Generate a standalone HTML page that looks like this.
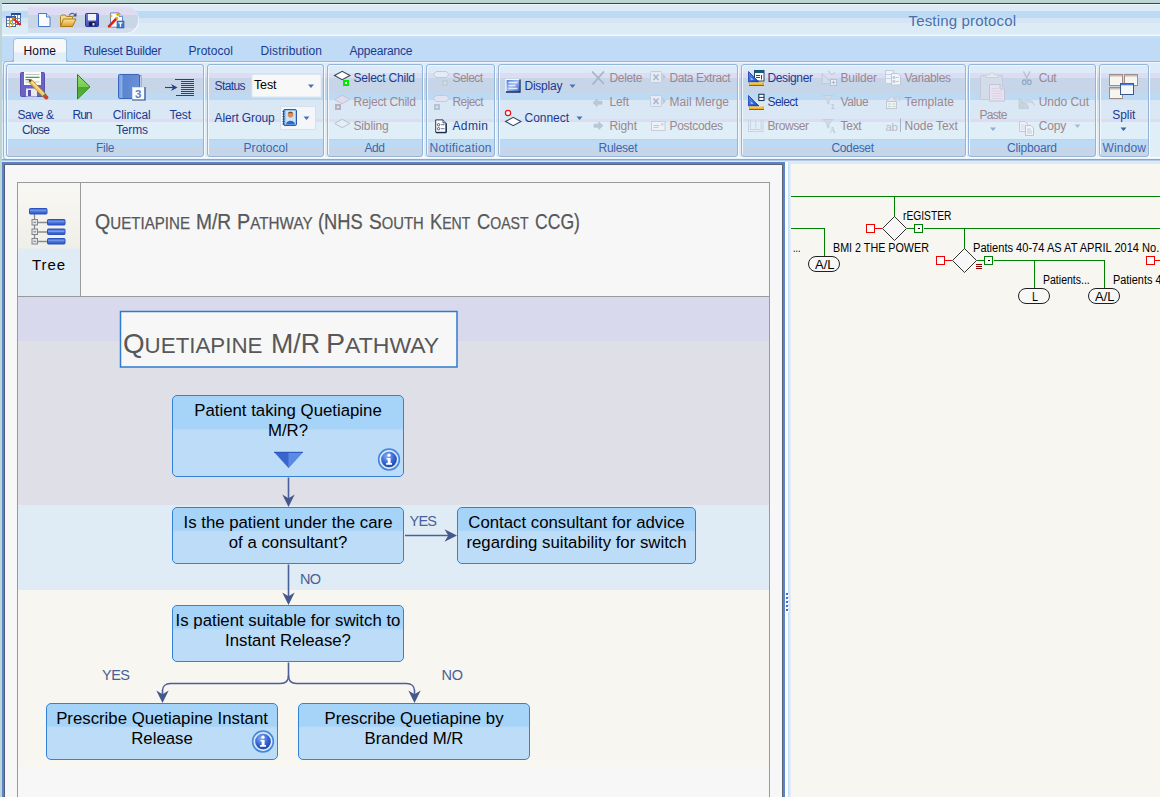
<!DOCTYPE html>
<html>
<head>
<meta charset="utf-8">
<title>Testing protocol</title>
<style>
html,body{margin:0;padding:0;}
body{width:1160px;height:797px;overflow:hidden;position:relative;background:#bdd5d5;font-family:"Liberation Sans",sans-serif;font-size:12px;line-height:14px;color:#1a3a92;}
div,span{box-sizing:border-box;}
svg{position:absolute;left:0;top:0;overflow:visible;}
#titlebar{position:absolute;left:2px;top:3px;width:1158px;height:34px;background:linear-gradient(#1f4587 0,#1f4587 1px,#eef5fb 1px,#eef5fb 2px,#dcebf5 2px,#dcebf5 8px,#bddaf4 8px,#bddaf4 15px,#d6e5f3 15px,#d6e5f3 20px,#dcecf6 20px,#dcecf6 31px,#f2f8fc 32px,#f2f8fc 33px,#c6def5 33px,#c6def5 34px);}
#qat{position:absolute;left:26px;top:3px;width:110px;height:27px;border-radius:0 13px 13px 0;background:linear-gradient(#e6e8f6 0,#dedcf2 2px,#dedcf2 9px,#c8d6e6 9px,#c8d6e6 22px,#d2deee 22px,#d2deee 26px);box-shadow:1px 1px 0 #eef4fb;}
#tabs{position:absolute;left:2px;top:37px;width:1158px;height:26px;background:linear-gradient(#c6def5 0,#bfdbf5 3px,#bfdbf5 100%);}
#tabs2{position:absolute;left:2px;top:37px;width:200px;height:26px;}
#hometab{position:absolute;left:11px;top:1px;width:54px;height:24px;border:1px solid #9dbfe2;border-bottom:none;border-radius:4px 4px 0 0;background:linear-gradient(#f9f9f9 0,#f6f7f8 13px,#e1edf7 14px,#e1edf7 24px);}
#hometab:before{content:"";position:absolute;left:-4px;bottom:0;width:3px;height:3px;border-right:1px solid #9dbfe2;border-bottom:1px solid #9dbfe2;border-radius:0 0 4px 0;}
#hometab:after{content:"";position:absolute;right:-4px;bottom:0;width:3px;height:3px;border-left:1px solid #9dbfe2;border-bottom:1px solid #9dbfe2;border-radius:0 0 0 4px;}
#ribbon{position:absolute;left:2px;top:62px;width:1158px;height:102px;background:linear-gradient(#e4eff9 0,#dcebf7 2px,#dcebf7 11px,#dcdcf2 11px,#dcdcf2 16px,#c6d6e8 16px,#c6d6e8 31px,#bddaf4 31px,#bddaf4 38px,#dae7f5 38px,#dae7f5 57px,#dcdcf2 57px,#dcdcf2 60px,#dfeef7 60px,#dfeef7 95px,#fbfdfe 95px,#fbfdfe 96px,#dbe7f4 97px,#8aa6c8 97px,#8aa6c8 98px,#b4cae4 98px,#b4cae4 99px,#dceaf6 99px,#dceaf6 102px);}
#ribedge{position:absolute;left:3px;top:61px;width:1170px;height:99px;border:1px solid #8fb8ea;border-radius:4px;border-bottom-color:#8aa6c8;box-shadow:inset 1px 1px 0 #f0f6fb;}
.grp{position:absolute;top:2px;height:93px;border:1px solid #93b4d6;border-radius:3px;box-shadow:1px 1px 0 #f6fafd,inset 1px 1px 0 #f0f6fb;background:linear-gradient(rgba(0,0,0,0) 0,rgba(0,0,0,0) 74px,#b8cce0 74px,#bddaf4 75px,#bddaf4 83px,#c6d6e8 83px,#c6d6e8 90px,#bddaf4 90px,#bddaf4 91px);}
.gl{position:absolute;white-space:nowrap;color:#3e66aa;}
.t{position:absolute;white-space:nowrap;}
.dis{color:#9a8890;}
.blk{color:#000;}
#leftpane{position:absolute;left:2px;top:162px;width:783px;height:640px;border:2px solid #5b84cc;background:#f7f7f7;}
#leftpane:before{content:"";position:absolute;left:0;top:0;right:0;bottom:0;border-left:1px solid #505c78;border-top:1px solid #5c6478;border-right:1px solid #5a6678;}
#inner{position:absolute;left:17px;top:182px;width:753px;height:620px;border:1px solid #9a9a9a;background:#f7f7f7;}
#hdr{position:absolute;left:0;top:0;width:751px;height:114px;border-bottom:1px solid #9a9a9a;background:#f7f7f7;}
#treecell{position:absolute;left:0;top:0;width:63px;height:113px;border-right:1px solid #9a9a9a;background:linear-gradient(#f7f7f7 0,#f7f6f0 14px,#f3f2ec 40px,#efefe9 65px,#dfecf6 66px,#dfecf6 113px);}
#canvas{position:absolute;left:0;top:114px;width:751px;height:510px;background:linear-gradient(#d9d9ee 0,#d9d9ee 44px,#dfdfe8 44px,#dfdfe8 208px,#dfecf6 208px,#dfecf6 293px,#f7f6f0 293px,#f7f6f0 470px,#f7f7f7 470px);}
.fb{position:absolute;border:1px solid #3283d7;border-radius:5px;background:linear-gradient(#a6d3f8 0,#a6d3f8 40%,#bcdcf7 43%,#bcdcf7 100%);color:#000;font-size:16.8px;line-height:20px;text-align:center;white-space:nowrap;}
#split1{position:absolute;left:785px;top:162px;width:3px;height:640px;background:#fdfdfd;}
#split2{position:absolute;left:788px;top:162px;width:3px;height:640px;background:linear-gradient(90deg,#c4dcf4,#d4e6f8 50%,#e8f0f8);}
#rightpane{position:absolute;left:791px;top:164px;width:369px;height:640px;background:#f7f6f0;}
.rt{position:absolute;white-space:nowrap;color:#000;font-size:12px;line-height:14px;}
.lbl{position:absolute;white-space:nowrap;color:#4a5f94;font-size:14.5px;line-height:16px;}
</style>
</head>
<body>
<div id="titlebar"><div id="qat"></div></div>
<div id="tabs"></div>
<div id="ribbon">
<div class="grp" style="left:4px;width:198px;"></div>
<div class="grp" style="left:205px;width:117px;"></div>
<div class="grp" style="left:325px;width:96px;"></div>
<div class="grp" style="left:424px;width:69px;"></div>
<div class="grp" style="left:496px;width:240px;"></div>
<div class="grp" style="left:739px;width:225px;"></div>
<div class="grp" style="left:966px;width:128px;"></div>
<div class="grp" style="left:1097px;width:50px;"></div>
</div>
<div id="ribedge"></div>
<div id="tabs2"><div id="hometab"></div></div>
<div id="leftpane"></div>
<div id="inner"><div id="hdr"><div id="treecell"></div></div><div id="canvas"></div></div>
<div id="split1"></div><div id="split2"></div><div id="rightpane"></div>
<div class="fb" style="left:172px;top:395px;width:232px;height:82px;padding-top:5px;">Patient taking Quetiapine<br>M/R?</div>
<div class="fb" style="left:172px;top:507px;width:232px;height:57px;padding-top:5px;">Is the patient under the care<br>of a consultant?</div>
<div class="fb" style="left:457px;top:507px;width:239px;height:57px;padding-top:5px;">Contact consultant for advice<br>regarding suitability for switch</div>
<div class="fb" style="left:172px;top:605px;width:232px;height:57px;padding-top:5px;">Is patient suitable for switch to<br>Instant Release?</div>
<div class="fb" style="left:46px;top:703px;width:232px;height:57px;padding-top:5px;">Prescribe Quetiapine Instant<br>Release</div>
<div class="fb" style="left:298px;top:703px;width:232px;height:57px;padding-top:5px;">Prescribe Quetiapine by<br>Branded M/R</div>
<svg width="1160" height="797" viewBox="0 0 1160 797">
<defs>
<linearGradient id="gBar" x1="0" y1="0" x2="0" y2="1"><stop offset="0" stop-color="#3a62cc"/><stop offset=".45" stop-color="#7aa0ec"/><stop offset=".55" stop-color="#4a76dc"/><stop offset="1" stop-color="#2a50c0"/></linearGradient>
<radialGradient id="gInfo" cx=".4" cy=".3" r=".8"><stop offset="0" stop-color="#8ab4f0"/><stop offset=".5" stop-color="#3a6ad8"/><stop offset="1" stop-color="#1a3a9a"/></radialGradient>
<g id="info"><circle r="10.400" fill="#b4cef0" stroke="#4088e0" stroke-width="1.500"/><circle r="8.600" fill="none" stroke="#e4eefa" stroke-width="1.100"/><circle r="7.800" fill="url(#gInfo)"/><circle cx="0" cy="-4.300" r="1.600" fill="#fff"/><path d="M-2.400 -1.600h4v5.200h1.400v1.700h-5.900v-1.700h1.600v-3.500h-1.100z" fill="#fff"/></g>
<path id="ahd" d="M0 0l-6.200-12.500l6.200 3.800l6.200-3.800z" fill="#44588e"/>
</defs>
<!-- tree icon -->
<g>
<path d="M34.500 214v26.500M35 222.500h13M35 232h13M35 241.500h13" stroke="#8a8a92" stroke-width="1.300" fill="none"/>
<rect x="29.500" y="208.500" width="17.500" height="5.500" rx=".8" fill="url(#gBar)" stroke="#2a52c0"/>
<rect x="47.500" y="219.500" width="17.500" height="5.500" rx=".8" fill="url(#gBar)" stroke="#2a52c0"/>
<rect x="47.500" y="229" width="17.500" height="5.500" rx=".8" fill="url(#gBar)" stroke="#2a52c0"/>
<rect x="47.500" y="238.500" width="17.500" height="5.500" rx=".8" fill="url(#gBar)" stroke="#2a52c0"/>
<rect x="32" y="219.500" width="5.500" height="5.500" fill="#e4e6ea" stroke="#80848c"/><rect x="32" y="229" width="5.500" height="5.500" fill="#e4e6ea" stroke="#80848c"/><rect x="32" y="238.500" width="5.500" height="5.500" fill="#e4e6ea" stroke="#80848c"/>
<path d="M33.500 222.300h2.500M33.500 231.800h2.500M33.500 241.300h2.500" stroke="#6a6e78" stroke-width=".9"/>
</g>
<!-- title box -->
<rect x="120.500" y="311.500" width="336.500" height="55.500" fill="#f7f7f7" stroke="#2f7bd2" stroke-width="1.500"/>
<!-- funnel in box1 -->
<path d="M274 452h29l-14.500 16z" fill="#3a66cc"/><path d="M288.500 452h14.500l-14.500 16z" fill="#5a8ae4"/><path d="M274 452.300h29" stroke="#2a52b8" stroke-width="1"/>
<use href="#info" x="389" y="459.500"/>
<use href="#info" x="263" y="741.500"/>
<!-- connectors -->
<g stroke="#4a5f98" stroke-width="1.600" fill="none">
<path d="M288.500 477.500v22"/>
<path d="M288.500 564.500v33"/>
<path d="M405 535.500h44"/>
<path d="M288.500 662.500v13c0 5 3 8 8 8h110c5 0 8 3 8 7v5"/>
<path d="M288.500 675.500c0 5-3 8-8 8h-110c-5 0-8 3-8 7v5"/>
</g>
<use href="#ahd" x="288.500" y="507"/>
<use href="#ahd" x="288.500" y="605"/>
<use href="#ahd" x="162.500" y="703"/>
<use href="#ahd" x="414.500" y="703"/>
<use href="#ahd" transform="translate(457 535.500) rotate(-90)"/>
<!-- splitter grip -->
<g><rect x="787" y="594" width="2" height="2" fill="#fff"/><rect x="786" y="593" width="2" height="2" fill="#3f6ccc"/><rect x="787" y="598" width="2" height="2" fill="#fff"/><rect x="786" y="597" width="2" height="2" fill="#3f6ccc"/><rect x="787" y="602" width="2" height="2" fill="#fff"/><rect x="786" y="601" width="2" height="2" fill="#3f6ccc"/><rect x="787" y="606" width="2" height="2" fill="#fff"/><rect x="786" y="605" width="2" height="2" fill="#3f6ccc"/><rect x="787" y="610" width="2" height="2" fill="#fff"/><rect x="786" y="609" width="2" height="2" fill="#3f6ccc"/></g>
<!-- right pane tree -->
<g shape-rendering="crispEdges" fill="none">
<path d="M791 196.500h369M894.500 196.500v20M791 228.500h33.500v28M907 228.500h7M924 228.500h236M964.500 228.500v20M977 260.500h7M994 260.500h110.500v28M1034.500 260.500v28" stroke="#008000" stroke-width="1"/>
<path d="M875 228.500h7M945 260.500h7M1155 260.500h5" stroke="#f00000" stroke-width="1"/>
<rect x="866.500" y="224.500" width="8" height="8" fill="#fdfdfd" stroke="#f00000"/>
<rect x="936.500" y="256.500" width="8" height="8" fill="#fdfdfd" stroke="#f00000"/>
<rect x="1146.500" y="256.500" width="8" height="8" fill="#fdfdfd" stroke="#f00000"/>
<rect x="914.500" y="224.500" width="8" height="8" fill="#fdfdfd" stroke="#008000"/><rect x="918" y="228" width="2" height="1" fill="#000"/>
<rect x="984.500" y="256.500" width="8" height="8" fill="#fdfdfd" stroke="#008000"/><rect x="988" y="260" width="2" height="1" fill="#000"/>
<path d="M976 264.500h6M976 266.500h6M976 268.500h6" stroke="#900000" stroke-width="1"/>
</g>
<path d="M882.500 228.500l12-12l12 12l-12 12z" fill="#f7f7f7" stroke="#303030" stroke-width="1"/>
<path d="M952.500 260.500l12-12l12 12l-12 12z" fill="#f7f7f7" stroke="#303030" stroke-width="1"/>
<rect x="808.500" y="256.500" width="31" height="15" rx="7.500" fill="#f7f7f7" stroke="#202020"/>
<rect x="1018.500" y="288.500" width="31" height="15" rx="7.500" fill="#f7f7f7" stroke="#202020"/>
<rect x="1088.500" y="288.500" width="31" height="15" rx="7.500" fill="#f7f7f7" stroke="#202020"/>
</svg>

<svg width="1160" height="165" viewBox="0 0 1160 165">
<defs>
<linearGradient id="gFold" x1="0" y1="0" x2="0" y2="1"><stop offset="0" stop-color="#fbe7a0"/><stop offset="1" stop-color="#e49a20"/></linearGradient>
<linearGradient id="gFlop" x1="0" y1="0" x2="1" y2="1"><stop offset="0" stop-color="#6f86e0"/><stop offset="1" stop-color="#26309a"/></linearGradient>
<linearGradient id="gRun" x1="0" y1="0" x2="0" y2="1"><stop offset="0" stop-color="#8fdc68"/><stop offset=".5" stop-color="#7acc55"/><stop offset=".5" stop-color="#4aa62a"/><stop offset="1" stop-color="#5ab83a"/></linearGradient>
<linearGradient id="gBook" x1="0" y1="0" x2="1" y2="0"><stop offset="0" stop-color="#6f98dc"/><stop offset=".15" stop-color="#8db0e8"/><stop offset=".22" stop-color="#5b85d0"/><stop offset="1" stop-color="#6a90d6"/></linearGradient>
<linearGradient id="gDisp" x1="0" y1="0" x2="1" y2="1"><stop offset="0" stop-color="#4a78dc"/><stop offset=".5" stop-color="#9ab8f0"/><stop offset="1" stop-color="#3a62c8"/></linearGradient>
<linearGradient id="gTri" x1="0" y1="0" x2="1" y2="1"><stop offset="0" stop-color="#5a8ae8"/><stop offset="1" stop-color="#1a46c0"/></linearGradient>
</defs>
<!-- app icon -->
<g>
<rect x="11.5" y="13.5" width="9" height="11" fill="#fff" stroke="#4a6a9a"/>
<rect x="11" y="13" width="10" height="2" fill="#2a4a9a"/>
<path d="M14.5 15v9M17.5 15v9M12 18.5h9M12 21.5h9" stroke="#6a8ab8" fill="none"/>
<rect x="6.5" y="16.5" width="9" height="10" fill="#fff" stroke="#4a6a9a"/>
<rect x="6" y="16" width="10" height="2" fill="#3a5aaa"/>
<path d="M9.5 18v8M12.5 18v8M7 20.5h8M7 23.5h8" stroke="#7a9ac8" fill="none"/>
<path d="M13 18.5L20.5 25" stroke="#e82010" stroke-width="2.2"/>
<path d="M12.2 17.6l1.8 1.6" stroke="#c89010" stroke-width="2.4"/>
<path d="M10.5 20v3M9 21.5h3M12.5 23v3M11 24.5h3M9.5 25.5v2.5M8.2 26.8h2.6" stroke="#e8b020" stroke-width="1"/>
</g>
<!-- QAT new -->
<path d="M38.5 13.5h8l3.5 3.5v9.500h-11.5z" fill="#fdfdff" stroke="#4a7acc"/>
<path d="M46.500 13.500v3.500h3.500" fill="#e8eef8" stroke="#4a7acc"/>
<!-- QAT open -->
<path d="M60.500 26v-9.500l1-1.500h4l1 1.500h6v2" fill="#f3d98a" stroke="#a8802a"/>
<path d="M60.500 26.500l3-7.500h12.500l-3.500 7.500z" fill="url(#gFold)" stroke="#a87a18"/>
<path d="M69 15.500c1.500-2.500 4.500-2.800 6-.5" fill="none" stroke="#4a6a9a" stroke-width="1.200"/>
<path d="M76.500 12.500v4h-3.800z" fill="#3a5a8a"/>
<!-- QAT save -->
<rect x="85.500" y="13.500" width="13" height="13" rx="1" fill="url(#gFlop)" stroke="#2a3a9a"/>
<rect x="88" y="14" width="8" height="6.500" fill="#f2f2f8"/>
<rect x="89" y="22" width="6.500" height="4" fill="#1a1a4a"/>
<rect x="92.500" y="23" width="2" height="2.500" fill="#e8e8f0"/>
<!-- QAT wizard -->
<path d="M110.500 12.900h8.500l3.500 3.500v10.800h-12z" fill="#fdfdff" stroke="#6a88b8"/>
<path d="M119 12.900v3.500h3.500" fill="#dfe8f4" stroke="#6a88b8"/>
<path d="M109 26.300L116.500 18.500" stroke="#e02010" stroke-width="2.600" stroke-linecap="round"/>
<path d="M116 19l1.600-1.600" stroke="#e8b020" stroke-width="2.600"/>
<path d="M111 14.500v3M109.500 16h3M117.500 13v3M116 14.500h3" stroke="#e8a818" stroke-width="1"/>
<rect x="117" y="21" width="7" height="7" fill="#3a7ad0" stroke="#2a5aa8" stroke-width=".6"/>
<path d="M118.500 22.800h4M120.500 22.800v4" stroke="#fff" stroke-width="1.300"/>
<!-- Save & Close -->
<g>
<rect x="20.500" y="72.500" width="24" height="24" rx="1" fill="#6a62c4" stroke="#5a50b0"/>
<rect x="24" y="72" width="17" height="13" fill="#fbfbfb"/>
<path d="M25.500 74.500h14M25.500 82h14" stroke="#c8c0c8" stroke-width="1"/>
<path d="M25.500 77.300h14M25.500 79.700h6" stroke="#18c030" stroke-width="1.200"/>
<rect x="26" y="88.500" width="11" height="8" fill="#e8e8f0"/>
<rect x="28" y="90" width="3" height="6" fill="#5a50b0"/>
<path d="M29.500 80.500l2.600-.6l14 14.500l-2.800 2.800l-14-14.500z" fill="#f5c858" stroke="#a87828" stroke-width=".7"/>
<path d="M31 80.800l13.600 14" stroke="#fbe9a8" stroke-width="1"/>
<path d="M28.300 79.500l1.800 3l1.800-2z" fill="#4a3a2a"/>
<path d="M43.300 97.200l2.800-2.800l1.800 1.800c.8.800.8 1.600 0 2.400l-.4.400c-.8.800-1.600.8-2.400 0z" fill="#d83828"/>
<path d="M42.300 96.200l2.800-2.800l1 1l-2.800 2.800z" fill="#3a8a4a"/>
</g>
<!-- Run -->
<path d="M77.500 74.500v24.500l12.500-12.200z" fill="url(#gRun)" stroke="#1a8a1a" stroke-width="1"/>
<!-- Clinical Terms -->
<rect x="139" y="75.500" width="2" height="22" fill="#f4f8fd" stroke="#4a78c4" stroke-width=".7"/>
<rect x="118.500" y="74.500" width="21" height="24" rx="1.200" fill="url(#gBook)" stroke="#3a66bb"/>
<rect x="132.500" y="87.500" width="12" height="12" fill="#fafbfd" stroke="#e8eef8" stroke-width=".6"/>
<path d="M132 100h13v-13" fill="none" stroke="#2a4a8a" stroke-width="1.200"/>
<text x="135" y="98.300" font-family="Liberation Sans, sans-serif" font-size="11.500" font-weight="bold" fill="#5b7fc8">3</text>
<!-- Test -->
<g stroke="#24427e" stroke-width="1.100" fill="none">
<path d="M175 79.500h19M176 95.500h18"/>
<path d="M181 81.500h13M181 83.500h13M181 85.500h13M181 87.500h13M181 89.500h13M181 91.500h13M181 93.500h13"/>
<path d="M165 87.500h11"/>
</g>
<path d="M171 84l6.500 3.500l-6.500 3.500l2-3.500z" fill="#24427e"/>
<!-- Protocol: combo + alert group -->
<rect x="252" y="74.500" width="69" height="22.500" fill="#f8f8f8" stroke="#dbe6f3" stroke-width="1"/>
<path d="M308 84.500h6l-3 3.500z" fill="#4a72b0"/>
<rect x="280.500" y="106.500" width="35" height="23" fill="#f4f6fa" stroke="#d4e0ee"/>
<g>
<rect x="283.500" y="109.500" width="13" height="16" rx="1.500" fill="#6aa8e8" stroke="#2a5aa8"/>
<rect x="285.500" y="110.500" width="10" height="14" fill="#cfe4f8"/>
<path d="M282.500 111.500h2M282.500 114h2M282.500 116.500h2M282.500 119h2M282.500 121.500h2M282.500 124h2" stroke="#3a4a6a" stroke-width="1"/>
<circle cx="290.500" cy="114.800" r="2.800" fill="#d89058"/>
<path d="M287.800 113.500c.5-2.500 4.800-2.500 5.400 0c-1.800-.8-3.600-.8-5.400 0z" fill="#7a4a1a"/>
<path d="M286 124.500c0-5 9-5 9 0z" fill="#2a6ad0"/>
</g>
<path d="M303.500 116.500h6l-3 3.500z" fill="#4a72b0"/>
<!-- Add group -->
<path d="M334.500 75.500l7.700-4.200l7.700 4.200l-7.700 4.200z" fill="#fff" stroke="#34465a" stroke-width="1.100"/>
<rect x="343" y="80" width="6" height="6" fill="#00ea00"/><rect x="345" y="82" width="2" height="2" fill="#fff"/>
<path d="M334.500 99.500l7.700-4.200l7.700 4.200l-7.700 4.200z" fill="#e0dcf0" stroke="#c4c4d0" stroke-width="1"/>
<rect x="335" y="104" width="6" height="6" fill="#b6afc0"/><rect x="337" y="106" width="2" height="2" fill="#e4e4f0"/>
<path d="M334.500 123.500l7.700-4.200l7.700 4.200l-7.700 4.200z" fill="#e4eef6" stroke="#b8c2cc" stroke-width="1"/>
<!-- Notification group -->
<path d="M433.500 74.500l2.500-3h10.500l2.500 3l-2.500 3h-10.500z" fill="#e2ecf6" stroke="#c0cad8" stroke-width="1"/>
<rect x="442" y="80" width="6" height="6" fill="#c2cedb"/><rect x="444" y="82" width="2" height="2" fill="#d8e2ee"/>
<path d="M433.500 98.500l2.500-3h10.500l2.500 3l-2.500 3h-10.500z" fill="#e0e4f2" stroke="#c4cad8" stroke-width="1"/>
<rect x="434" y="104" width="6" height="6" fill="#b4c4d8"/><rect x="436" y="106" width="2" height="2" fill="#d8e2ee"/>
<path d="M435.700 119.900h7.300l3 3v9.400h-10.300z" fill="#fdfdfd" stroke="#2a3a5a" stroke-width="1"/>
<path d="M443 119.900v3h3" fill="#d0dcec" stroke="#2a3a5a" stroke-width=".8"/>
<path d="M446.300 123.500v9M436 132.600h10.300" stroke="#1a2a4a" stroke-width="1.200"/>
<circle cx="438.600" cy="124.700" r="1.200" fill="none" stroke="#2a3a5a" stroke-width=".8"/><circle cx="438.600" cy="128.700" r="1.200" fill="none" stroke="#2a3a5a" stroke-width=".8"/>
<path d="M441 124.700h3.500M441 128.700h3.500" stroke="#5a6a8a" stroke-width=".9"/>
<!-- Display -->
<rect x="506" y="79.500" width="13.500" height="12" fill="url(#gDisp)"/>
<path d="M506 91.500v-12h13.500" fill="none" stroke="#f4f8fd" stroke-width="1.200"/>
<path d="M506 92h14v-12.500" fill="none" stroke="#1a2a5a" stroke-width="1.300"/>
<path d="M508.500 82.500h9M508.500 85.500h7M508.500 88.500h9" stroke="#e6eefb" stroke-width="1.300"/>
<path d="M569.500 84.500h6l-3 3.500z" fill="#4a72b0"/>
<!-- Connect -->
<circle cx="508" cy="113" r="2.600" fill="#fff" stroke="#f01010" stroke-width="1.200"/>
<path d="M505.500 121.500l7.700-4.200l7.700 4.200l-7.700 4.200z" fill="#fff" stroke="#34466a" stroke-width="1.100"/>
<path d="M576.500 116.500h6l-3 3.500z" fill="#4a72b0"/>
<!-- Delete/Left/Right -->
<path d="M592.500 72l11 11.500M603.500 72l-10.500 12" stroke="#a4b4c6" stroke-width="1.700" stroke-linecap="round" fill="none"/>
<path d="M593 102.800l4.200-3.800v2.300h4.800v3h-4.800v2.300z" fill="#bcc8d4" stroke="#aab8c8" stroke-width=".5"/>
<path d="M603 125.700l-4.200-3.800v2.300h-4.800v3h4.800v2.300z" fill="#bcc8d4" stroke="#aab8c8" stroke-width=".5"/>
<!-- Data extract / mail merge / postcodes -->
<g id="xl1"><rect x="650.500" y="71.500" width="11" height="11" rx="1" fill="#e4ebf4" stroke="#c4cedc"/><path d="M653.500 74.500l5 5.500M658.500 74.500l-5 5.500" stroke="#a4b4cc" stroke-width="1.400"/><path d="M662.500 73.500l3.500 3.500l-3.500 3.500z" fill="#bcc8d8"/></g>
<g><rect x="650.500" y="95.500" width="11" height="11" rx="1" fill="#e4ebf4" stroke="#c4cedc"/><path d="M653.500 98.500l5 5.500M658.500 98.500l-5 5.500" stroke="#a4b4cc" stroke-width="1.400"/><path d="M662.500 97.500l3.500 3.500l-3.500 3.500z" fill="#bcc8d8"/></g>
<rect x="651.500" y="121.500" width="13.500" height="9" fill="#eef2f8" stroke="#c8ccd8"/><path d="M653.500 125.500h6M653.500 127.500h5" stroke="#c0c8d8"/><rect x="661" y="123" width="2.500" height="2.500" fill="#d0d4e4"/>
<!-- Designer -->
<rect x="754.500" y="70.500" width="9.500" height="10.500" fill="#fff" stroke="#1a4a6a"/>
<rect x="754.500" y="70.500" width="9.500" height="2.500" fill="#1a5a7a"/>
<path d="M756 75.500h4M756 77.500h4M761.500 75v4.500" stroke="#2a4a6a" stroke-width="1"/>
<path d="M748.500 71.500v10.500h10.500z" fill="url(#gTri)" stroke="#1a3ab0" stroke-width=".8"/>
<path d="M750.700 77v3h3z" fill="#9cc0f4"/>
<rect x="749" y="82.500" width="15" height="3" fill="#f0b020"/><rect x="749" y="85" width="15" height="1" fill="#9a6400"/>
<path d="M751 82.500v1.500M753 82.500v1.500M755 82.500v1.500M757 82.500v1.500M759 82.500v1.500M761 82.500v1.500" stroke="#fde8a0" stroke-width=".8"/>
<!-- Select (codeset) -->
<rect x="758.800" y="94.300" width="5.200" height="6.200" fill="#fff" stroke="#1a3a5a" stroke-width="1.100"/><path d="M759 97.400h5" stroke="#1a3a5a" stroke-width="1"/>
<path d="M748.500 95.500v10.500h10.500z" fill="url(#gTri)" stroke="#1a3ab0" stroke-width=".8"/>
<path d="M750.700 101v3h3z" fill="#9cc0f4"/>
<rect x="749" y="106.500" width="15" height="3" fill="#f0b020"/><rect x="749" y="109" width="15" height="1" fill="#9a6400"/>
<path d="M751 106.500v1.500M753 106.500v1.500M755 106.500v1.500M757 106.500v1.500M759 106.500v1.500M761 106.500v1.500" stroke="#fde8a0" stroke-width=".8"/>
<!-- Browser -->
<path d="M748.500 120v11.500h6.500l.8.800l.8-.8h6.500v-11.500h-2v9.500h-4.500l-.8.600l-.8-.6h-4.500v-9.500z" fill="#e4ebf4" stroke="#c4d0e0" stroke-width=".9"/>
<path d="M755.800 119v11" stroke="#ccd6e4" stroke-width="1"/>
<!-- Builder -->
<path d="M822 73.500v10h10z" fill="#d4deea" stroke="#b8c6d8" stroke-width=".8"/>
<path d="M828 71l4 4l3-2.500" fill="none" stroke="#c4d0e0" stroke-width="1.200"/>
<rect x="830.500" y="79.500" width="6" height="6" fill="#e8eef6" stroke="#b4c2d6"/><path d="M831.800 82.500h3.400M833.500 80.800v3.400" stroke="#a4b4cc" stroke-width=".9"/>
<!-- Value funnel -->
<path d="M823 95.500h10l-4 4.500v4l-2-1.200v-2.800z" fill="#d0dae6" stroke="#bcc8d8" stroke-width=".7"/>
<text x="830.500" y="108.500" font-family="Liberation Sans, sans-serif" font-size="8" fill="#b4c0d0">1</text>
<path d="M823 119.500h10l-4 4.500v4l-2-1.200v-2.800z" fill="#d0dae6" stroke="#bcc8d8" stroke-width=".7"/>
<text x="829.500" y="132.500" font-family="Liberation Serif, serif" font-size="8.500" fill="#b4c0d0">A</text>
<!-- Variables -->
<rect x="885.500" y="70.500" width="8" height="13" fill="#eef3f9" stroke="#c4cedc"/><path d="M886 74.500h7M886 78.500h7" stroke="#c8d2e0"/>
<path d="M891.500 73.500h6.500l2.500 2.500v9h-9z" fill="#f2f5fa" stroke="#bcc8da"/>
<circle cx="894" cy="77.500" r="1" fill="none" stroke="#9aaac4" stroke-width=".8"/><circle cx="894" cy="81.500" r="1" fill="none" stroke="#9aaac4" stroke-width=".8"/><path d="M896 77.500h3M896 81.500h3" stroke="#b4c0d4" stroke-width=".8"/>
<!-- Template -->
<path d="M886 101.500l5.500-5l5.500 5" fill="#dfe4ee" stroke="#c4ccd8"/>
<rect x="886.500" y="101.500" width="10" height="7" fill="#eef2f8" stroke="#c0c8d6"/><path d="M888 104h3M892.500 104h3M888 106.500h3M892.500 106.500h3" stroke="#c4d4c8" stroke-width="1"/>
<path d="M894 98c2-3 5-3 6.500 0l-1.500 3" fill="none" stroke="#c8d0dc" stroke-width="1.500"/>
<!-- Node text -->
<text x="885.500" y="130.500" font-family="Liberation Sans, sans-serif" font-size="11.500" fill="#b4bccc" letter-spacing="-.3">ab</text>
<path d="M900.500 118.500v13.500" stroke="#a4b2c8" stroke-width="1"/>
<!-- Paste -->
<rect x="980.500" y="75.500" width="22" height="24" rx="1" fill="#d3dde9" stroke="#c2cbda"/>
<path d="M986 77.500v-2.500h4c0-3 4-3 4 0h4v2.500z" fill="#e6ebf2" stroke="#c8ccd8" stroke-width=".8"/>
<path d="M989.500 84.500h10.500l4.500 4.500v12h-15z" fill="#e9e1f1" stroke="#c4c4d4"/>
<path d="M1000 84.500v4.500h4.500" fill="#d8dce8" stroke="#b8c0d0" stroke-width=".8"/>
<path d="M992 88.500h6M992 91h10M992 93.500h10M992 96h10M992 98.500h10" stroke="#d4d4e4" stroke-width=".9"/>
<path d="M990 127.500h6l-3 3.500z" fill="#8fb0d0"/>
<!-- Cut -->
<path d="M1023.500 71.500l4.500 9M1030 71.500l-4.500 9" stroke="#b4c0cc" stroke-width="1.300" fill="none"/>
<ellipse cx="1024.300" cy="82.300" rx="1.800" ry="2.300" fill="none" stroke="#94acc8" stroke-width="1.300"/><ellipse cx="1029.300" cy="82.300" rx="1.800" ry="2.300" fill="none" stroke="#94acc8" stroke-width="1.300"/>
<!-- Undo cut -->
<path d="M1019 98.500v10h9.500c0-4-4-7-9.500-10z" fill="#c8d4dc" stroke="#bcc8d4" stroke-width=".7"/>
<path d="M1022 103c4-5 11-4 12.500 2.500c-2-3.500-6-4.500-9.500-2z" fill="#d4dce6" stroke="#bcc8d8" stroke-width=".7"/>
<!-- Copy -->
<path d="M1019.500 121.500h5.500l2.500 2.500v7.500h-8z" fill="#eef2f8" stroke="#c4ccd8"/><path d="M1021 125h4M1021 127h5M1021 129h5" stroke="#ccd4e0" stroke-width=".8"/>
<path d="M1025.500 125.500h5.500l2.500 2.500v7.500h-8z" fill="#f2f4f9" stroke="#bcc4d4"/><path d="M1027 129h4M1027 131h5M1027 133h5" stroke="#b4c4dc" stroke-width=".8"/>
<path d="M1074.500 124.500h6l-3 3.500z" fill="#a8bed8"/>
<!-- Split -->
<g>
<rect x="1109.500" y="74.500" width="13" height="11" fill="#f7f6ee" stroke="#a08c8c"/><path d="M1110 75.800h12" stroke="#b8b0a8" stroke-width="1.200"/>
<rect x="1124.500" y="74.500" width="13" height="11" fill="#f7f6ee" stroke="#a08c8c"/><path d="M1125 75.800h12" stroke="#b8b0a8" stroke-width="1.200"/>
<rect x="1109.500" y="87.500" width="13" height="11" fill="#f7f6ee" stroke="#a08c8c"/><path d="M1110 88.800h12" stroke="#b8b0a8" stroke-width="1.200"/>
<rect x="1120.500" y="83.500" width="13" height="11" fill="#f7f7fa" stroke="#3a5888"/>
<path d="M1121 84.500h12" stroke="#4a7ae4" stroke-width="1.600"/>
</g>
<path d="M1120.500 127.500h6l-3 3.500z" fill="#3a62a8"/>
</svg>

<div class="t" id="h0" style="left:95.0px;top:208px;font-size:21.5px;line-height:28px;color:#585858;-webkit-text-stroke:0.25px #585858;transform-origin:0 0;transform:scaleX(0.9105);">Q<span style="font-size:16.6px">UETIAPINE</span></div>
<div class="t" id="h1" style="left:196.3px;top:208px;font-size:21.5px;line-height:28px;color:#585858;-webkit-text-stroke:0.25px #585858;transform-origin:0 0;transform:scaleX(0.8929);">M/R</div>
<div class="t" id="h2" style="left:236.6px;top:208px;font-size:21.5px;line-height:28px;color:#585858;-webkit-text-stroke:0.25px #585858;transform-origin:0 0;transform:scaleX(0.9191);">P<span style="font-size:16.6px">ATHWAY</span></div>
<div class="t" id="h3" style="left:318.4px;top:208px;font-size:21.5px;line-height:28px;color:#585858;-webkit-text-stroke:0.25px #585858;transform-origin:0 0;transform:scaleX(0.8523);">(NHS</div>
<div class="t" id="h4" style="left:369.0px;top:208px;font-size:21.5px;line-height:28px;color:#585858;-webkit-text-stroke:0.25px #585858;transform-origin:0 0;transform:scaleX(0.8915);">S<span style="font-size:16.6px">OUTH</span></div>
<div class="t" id="h5" style="left:430.0px;top:208px;font-size:21.5px;line-height:28px;color:#585858;-webkit-text-stroke:0.25px #585858;transform-origin:0 0;transform:scaleX(0.8500);">K<span style="font-size:16.6px">ENT</span></div>
<div class="t" id="h6" style="left:477.0px;top:208px;font-size:21.5px;line-height:28px;color:#585858;-webkit-text-stroke:0.25px #585858;transform-origin:0 0;transform:scaleX(0.8498);">C<span style="font-size:16.6px">OAST</span></div>
<div class="t" id="h7" style="left:535.3px;top:208px;font-size:21.5px;line-height:28px;color:#585858;-webkit-text-stroke:0.25px #585858;transform-origin:0 0;transform:scaleX(0.8173);">CCG)</div>
<div class="t" id="b0" style="left:123.0px;top:326px;font-size:28px;line-height:36px;color:#585858;transform-origin:0 0;transform:scaleX(0.9924);">Q<span style="font-size:22.5px">UETIAPINE</span></div>
<div class="t" id="b1" style="left:270.5px;top:326px;font-size:28px;line-height:36px;color:#585858;transform-origin:0 0;transform:scaleX(0.9546);">M/R</div>
<div class="t" id="b2" style="left:326.3px;top:326px;font-size:28px;line-height:36px;color:#585858;transform-origin:0 0;transform:scaleX(1.0220);">P<span style="font-size:22.5px">ATHWAY</span></div>
<div class="t " id="t0" style="left:908.5px;top:12px;font-size:15px;line-height:18px;letter-spacing:0.163px;color:#4670b0;">Testing protocol</div>
<div class="t " id="t1" style="left:23.5px;top:44px;font-size:12px;line-height:14px;letter-spacing:0.161px;color:#140822;">Home</div>
<div class="t " id="t2" style="left:83.5px;top:44px;font-size:12px;line-height:14px;letter-spacing:-0.241px;">Ruleset Builder</div>
<div class="t " id="t3" style="left:188.5px;top:44px;font-size:12px;line-height:14px;letter-spacing:0.067px;">Protocol</div>
<div class="t " id="t4" style="left:260.5px;top:44px;font-size:12px;line-height:14px;letter-spacing:0.134px;">Distribution</div>
<div class="t " id="t5" style="left:349.5px;top:44px;font-size:12px;line-height:14px;letter-spacing:-0.191px;">Appearance</div>
<div class="t " id="t6" style="left:17.5px;top:108px;font-size:12px;line-height:14px;letter-spacing:-0.441px;">Save &amp;</div>
<div class="t " id="t7" style="left:22.0px;top:123px;font-size:12px;line-height:14px;letter-spacing:-0.672px;">Close</div>
<div class="t " id="t8" style="left:72.5px;top:108px;font-size:12px;line-height:14px;letter-spacing:-1.000px;">Run</div>
<div class="t " id="t9" style="left:112.7px;top:108px;font-size:12px;line-height:14px;letter-spacing:-0.098px;">Clinical</div>
<div class="t " id="t10" style="left:116.0px;top:123px;font-size:12px;line-height:14px;letter-spacing:-0.168px;">Terms</div>
<div class="t " id="t11" style="left:169.5px;top:108px;font-size:12px;line-height:14px;letter-spacing:-0.172px;">Test</div>
<div class="t " id="t12" style="left:214.5px;top:79px;font-size:12px;line-height:14px;letter-spacing:-0.606px;">Status</div>
<div class="t blk" id="t13" style="left:254.0px;top:78px;font-size:12.5px;line-height:15px;letter-spacing:-0.146px;">Test</div>
<div class="t " id="t14" style="left:214.5px;top:111px;font-size:12px;line-height:14px;letter-spacing:-0.116px;">Alert Group</div>
<div class="t " id="t15" style="left:353.5px;top:71px;font-size:12px;line-height:14px;letter-spacing:-0.230px;">Select Child</div>
<div class="t dis" id="t16" style="left:353.5px;top:95px;font-size:12px;line-height:14px;letter-spacing:-0.200px;">Reject Child</div>
<div class="t dis" id="t17" style="left:353.5px;top:119px;font-size:12px;line-height:14px;letter-spacing:-0.155px;">Sibling</div>
<div class="t dis" id="t18" style="left:452.5px;top:71px;font-size:12px;line-height:14px;letter-spacing:-0.572px;">Select</div>
<div class="t dis" id="t19" style="left:452.5px;top:95px;font-size:12px;line-height:14px;letter-spacing:-0.603px;">Reject</div>
<div class="t " id="t20" style="left:452.5px;top:119px;font-size:12px;line-height:14px;letter-spacing:0.371px;">Admin</div>
<div class="t " id="t21" style="left:524.5px;top:79px;font-size:12px;line-height:14px;letter-spacing:-0.243px;">Display</div>
<div class="t " id="t22" style="left:524.5px;top:111px;font-size:12px;line-height:14px;letter-spacing:-0.034px;">Connect</div>
<div class="t dis" id="t23" style="left:609.5px;top:71px;font-size:12px;line-height:14px;letter-spacing:-0.338px;">Delete</div>
<div class="t dis" id="t24" style="left:609.5px;top:95px;font-size:12px;line-height:14px;letter-spacing:-0.172px;">Left</div>
<div class="t dis" id="t25" style="left:609.5px;top:119px;font-size:12px;line-height:14px;letter-spacing:-0.129px;">Right</div>
<div class="t dis" id="t26" style="left:669.5px;top:71px;font-size:12px;line-height:14px;letter-spacing:-0.439px;">Data Extract</div>
<div class="t dis" id="t27" style="left:669.5px;top:95px;font-size:12px;line-height:14px;letter-spacing:0.016px;">Mail Merge</div>
<div class="t dis" id="t28" style="left:669.5px;top:119px;font-size:12px;line-height:14px;letter-spacing:-0.318px;">Postcodes</div>
<div class="t " id="t29" style="left:767.5px;top:71px;font-size:12px;line-height:14px;letter-spacing:-0.362px;">Designer</div>
<div class="t " id="t30" style="left:767.5px;top:95px;font-size:12px;line-height:14px;letter-spacing:-0.572px;">Select</div>
<div class="t dis" id="t31" style="left:767.5px;top:119px;font-size:12px;line-height:14px;letter-spacing:-0.419px;">Browser</div>
<div class="t dis" id="t32" style="left:840.5px;top:71px;font-size:12px;line-height:14px;letter-spacing:-0.143px;">Builder</div>
<div class="t dis" id="t33" style="left:840.5px;top:95px;font-size:12px;line-height:14px;letter-spacing:-0.378px;">Value</div>
<div class="t dis" id="t34" style="left:840.5px;top:119px;font-size:12px;line-height:14px;letter-spacing:-0.272px;">Text</div>
<div class="t dis" id="t35" style="left:904.6px;top:71px;font-size:12px;line-height:14px;letter-spacing:-0.343px;">Variables</div>
<div class="t dis" id="t36" style="left:904.6px;top:95px;font-size:12px;line-height:14px;letter-spacing:0.100px;">Template</div>
<div class="t dis" id="t37" style="left:904.6px;top:119px;font-size:12px;line-height:14px;letter-spacing:-0.077px;">Node Text</div>
<div class="t dis" id="t38" style="left:979.5px;top:108px;font-size:12px;line-height:14px;letter-spacing:-0.697px;">Paste</div>
<div class="t dis" id="t39" style="left:1038.7px;top:71px;font-size:12px;line-height:14px;letter-spacing:-0.344px;">Cut</div>
<div class="t dis" id="t40" style="left:1038.7px;top:95px;font-size:12px;line-height:14px;letter-spacing:-0.058px;">Undo Cut</div>
<div class="t dis" id="t41" style="left:1038.7px;top:119px;font-size:12px;line-height:14px;letter-spacing:-0.172px;">Copy</div>
<div class="t " id="t42" style="left:1112.3px;top:108px;font-size:12px;line-height:14px;letter-spacing:-0.061px;">Split</div>
<div class="t gl" id="t43" style="left:96.0px;top:141px;font-size:12px;line-height:14px;letter-spacing:-0.281px;">File</div>
<div class="t gl" id="t44" style="left:243.5px;top:141px;font-size:12px;line-height:14px;letter-spacing:0.067px;">Protocol</div>
<div class="t gl" id="t45" style="left:364.5px;top:141px;font-size:12px;line-height:14px;letter-spacing:-0.430px;">Add</div>
<div class="t gl" id="t46" style="left:429.5px;top:141px;font-size:12px;line-height:14px;letter-spacing:0.239px;">Notification</div>
<div class="t gl" id="t47" style="left:598.5px;top:141px;font-size:12px;line-height:14px;letter-spacing:-0.281px;">Ruleset</div>
<div class="t gl" id="t48" style="left:831.5px;top:141px;font-size:12px;line-height:14px;letter-spacing:-0.367px;">Codeset</div>
<div class="t gl" id="t49" style="left:1007.0px;top:141px;font-size:12px;line-height:14px;letter-spacing:-0.172px;">Clipboard</div>
<div class="t gl" id="t50" style="left:1102.5px;top:141px;font-size:12px;line-height:14px;letter-spacing:0.163px;">Window</div>
<div class="t blk" id="t51" style="left:32.0px;top:256px;font-size:15px;line-height:18px;letter-spacing:0.901px;">Tree</div>
<div class="t blk" id="t52" style="left:903.0px;top:209px;font-size:12.5px;line-height:15px;transform-origin:0 0;transform:scaleX(0.8214);">rEGISTER</div>
<div class="t blk" id="t53" style="left:832.6px;top:241px;font-size:12.5px;line-height:15px;transform-origin:0 0;transform:scaleX(0.8594);">BMI 2 THE POWER</div>
<div class="t blk" id="t54" style="left:792.6px;top:241px;font-size:12.5px;line-height:15px;transform-origin:0 0;transform:scaleX(0.7100);">...</div>
<div class="t blk" id="t55" style="left:972.6px;top:241px;font-size:12.5px;line-height:15px;transform-origin:0 0;transform:scaleX(0.8859);">Patients 40-74 AS AT APRIL 2014 No..</div>
<div class="t blk" id="t56" style="left:1042.7px;top:273px;font-size:12.5px;line-height:15px;transform-origin:0 0;transform:scaleX(0.8418);">Patients...</div>
<div class="t blk" id="t57" style="left:1112.5px;top:273px;font-size:12.5px;line-height:15px;transform-origin:0 0;transform:scaleX(0.8724);">Patients 4</div>
<div class="t blk" id="t58" style="left:814.5px;top:258px;font-size:12.5px;line-height:15px;transform-origin:0 0;transform:scaleX(1.0391);">A/L</div>
<div class="t blk" id="t59" style="left:1031.5px;top:290px;font-size:12.5px;line-height:15px;transform-origin:0 0;transform:scaleX(0.8629);">L</div>
<div class="t blk" id="t60" style="left:1094.5px;top:290px;font-size:12.5px;line-height:15px;transform-origin:0 0;transform:scaleX(1.0391);">A/L</div>
<div class="t " id="t61" style="left:409.5px;top:513px;font-size:14.5px;line-height:17px;letter-spacing:-0.758px;color:#4a5f94;">YES</div>
<div class="t " id="t62" style="left:300.0px;top:571px;font-size:14.5px;line-height:17px;letter-spacing:-0.750px;color:#4a5f94;">NO</div>
<div class="t " id="t63" style="left:102.0px;top:667px;font-size:14.5px;line-height:17px;letter-spacing:-0.508px;color:#4a5f94;">YES</div>
<div class="t " id="t64" style="left:441.5px;top:667px;font-size:14.5px;line-height:17px;letter-spacing:-0.250px;color:#4a5f94;">NO</div>
</body>
</html>
